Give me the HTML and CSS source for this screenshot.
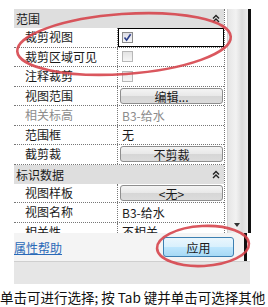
FILE: index.html
```html
<!DOCTYPE html>
<html lang="zh-CN">
  <head>
    <meta charset="UTF-8" />
    <title>属性</title>
    <link rel="stylesheet" href="styles.css">
  </head>
  <body>
    <section class="window">
      <div class="props">
        <div class="grid">
          <div class="group">范围<span class="fold"><svg width="8" height="9" viewBox="0 0 8 9"><path d="M1 4.5 L4 1.5 L7 4.5 M1 8 L4 5 L7 8" fill="none" stroke="#222" stroke-width="1.4"/></svg></span></div>
          <div class="row"><div class="label">裁剪视图</div><div class="value focus"><span class="check on"><svg width="9" height="9" viewBox="0 0 9 9"><path d="M1.5 4.5 L3.6 7.2 L7.6 1.2" fill="none" stroke="#2b3f8a" stroke-width="1.6"/></svg></span></div></div>
          <div class="row"><div class="label">裁剪区域可见</div><div class="value"><span class="check"></span></div></div>
          <div class="row"><div class="label">注释裁剪</div><div class="value"><span class="check"></span></div></div>
          <div class="row"><div class="label">视图范围</div><div class="value"><span class="btn">编辑...</span></div></div>
          <div class="row dim"><div class="label">相关标高</div><div class="value">B3-给水</div></div>
          <div class="row"><div class="label">范围框</div><div class="value">无</div></div>
          <div class="row"><div class="label">截剪裁</div><div class="value"><span class="btn">不剪裁</span></div></div>
          <div class="group">标识数据<span class="fold"><svg width="8" height="9" viewBox="0 0 8 9"><path d="M1 4.5 L4 1.5 L7 4.5 M1 8 L4 5 L7 8" fill="none" stroke="#222" stroke-width="1.4"/></svg></span></div>
          <div class="row"><div class="label">视图样板</div><div class="value"><span class="btn">&lt;无&gt;</span></div></div>
          <div class="row"><div class="label">视图名称</div><div class="value">B3-给水</div></div>
          <div class="row"><div class="label">相关性</div><div class="value">不相关</div></div>
        </div>
        <div class="scroll"><span class="down"></span></div>
        <div class="edge"></div>
      </div>
      <div class="foot">
        <a class="help" href="#">属性帮助</a>
        <span class="apply">应用</span>
      </div>
      <div class="band"></div>
      <div class="status">单击可进行选择; 按 Tab 键并单击可选择其他</div>

      <!-- 标注圈 -->
      <svg class="mark" width="268" height="307" viewBox="0 0 268 307">
        <ellipse cx="124" cy="44" rx="107" ry="30" transform="rotate(-4 124 44)" fill="none" stroke="#d6454d" stroke-width="2.6" opacity="0.9"/>
        <ellipse cx="203" cy="246" rx="46" ry="20" transform="rotate(-3 203 246)" fill="none" stroke="#d6454d" stroke-width="2.6" opacity="0.9"/>
      </svg>
    </section>
  </body>
</html>
```

FILE: styles.css
```css
body {
  margin: 0;
  background: #fff;
  font-family: "Noto Sans CJK SC", "Liberation Sans", sans-serif;
  font-size: 12px;
  color: #1a1a1a;
}
.window {
  position: relative;
  width: 268px;
  height: 307px;
  overflow: hidden;
  padding-top: 9px;
  box-sizing: border-box;
}
.props {
  display: flex;
  margin-left: 14px;
  height: 224px;
}
.grid {
  width: 210px;
  overflow: hidden;
  border-right: 1px dotted #777;
}
.group {
  display: flex;
  align-items: center;
  justify-content: space-between;
  height: 19px;
  padding: 0 4px 0 2px;
  background: #dedede;
}
.fold {
  display: flex;
}
.row {
  display: flex;
  height: 19.5px;
  border-bottom: 1px dotted #777;
  box-sizing: border-box;
}
.label {
  width: 104px;
  padding-left: 11px;
  box-sizing: border-box;
  border-right: 1px dotted #777;
  line-height: 18px;
}
.value {
  flex: 1;
  display: flex;
  align-items: center;
  padding-left: 4px;
}
.focus {
  outline: 1px solid #000;
  outline-offset: -1px;
}
.dim {
  color: #8c8c8c;
}
.check {
  width: 11px;
  height: 11px;
  border: 1px solid #b8b8b8;
  background: linear-gradient(#e4e4e4, #f6f6f6);
  box-sizing: border-box;
  display: flex;
  align-items: center;
  justify-content: center;
}
.check.on {
  border-color: #8a8a8a;
  background: linear-gradient(#dcdce4, #f8f8fa);
}
.btn {
  flex: 1;
  margin: 0 1px 0 -2px;
  height: 16px;
  line-height: 15px;
  text-align: center;
  border: 1px solid #8e8e8e;
  border-radius: 3px;
  background: linear-gradient(#f4f4f4 0%, #e8e8e8 50%, #d6d6d6 51%, #dcdcdc 100%);
  box-sizing: border-box;
}
.scroll {
  position: relative;
  width: 20px;
  margin-left: 2px;
  background: linear-gradient(90deg, #e6e6e6, #f2f2f2 40%, #dcdcdc 70%, #ededed);
  border-left: 1px solid #d0d0d0;
}
.down {
  position: absolute;
  left: 6px;
  bottom: 6px;
  border-left: 3px solid transparent;
  border-right: 3px solid transparent;
  border-top: 4px solid #333;
}
.edge {
  width: 3px;
  background: #111;
}
.foot {
  display: flex;
  align-items: center;
  justify-content: space-between;
  height: 28px;
  margin-left: 14px;
  width: 233px;
  padding-right: 10px;
  box-sizing: border-box;
  background: #f4f4f4;
  border-right: 3px solid #111;
}
.help {
  color: #2a6ab8;
  text-decoration: underline;
}
.apply {
  width: 71px;
  height: 20px;
  line-height: 19px;
  text-align: center;
  border: 1px solid #3c7fb1;
  border-radius: 3px;
  background: linear-gradient(#eaf6fd 0%, #d9f0fc 50%, #bee6fd 51%, #a7d9f5 100%);
  box-sizing: border-box;
}
.band {
  height: 22px;
  margin-left: 14px;
  width: 236px;
  background: #e6e6e6;
  border-top: 1px solid #cfcfcf;
}
.status {
  padding-top: 5px;
  line-height: 16px;
  white-space: nowrap;
  font-size: 13.5px;
  color: #111;
}
.mark {
  position: absolute;
  left: 0;
  top: 0;
  pointer-events: none;
}
```
